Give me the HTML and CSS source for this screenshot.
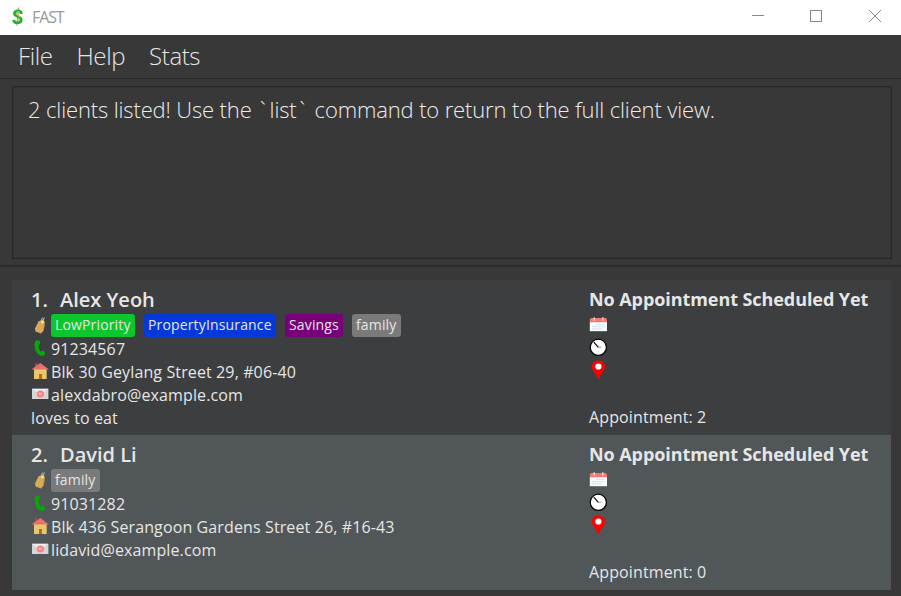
FILE: index.html
```html
<!DOCTYPE html>
<html lang="en">
<head>
<meta charset="utf-8">
<title>FAST</title>
<link rel="stylesheet" href="styles.css">
</head>
<body>
<svg class="defs" aria-hidden="true">
  <symbol id="tag" viewBox="0 0 18 18">
    <path d="M10.6 4 11.4 1.5M12 5 13.4 1.4" stroke="#c9c9c9" stroke-width=".9" fill="none"/>
    <path d="M7.4 5.4 11.4 3.6Q13.6 4.4 13.8 6.4L12.6 14.5 10 17.4 4.6 15.6 3.9 12.8Z" fill="#d8ab58"/>
    <path d="M13.5 6.8 12.4 14.5 10 17.2" stroke="#b98b3e" stroke-width=".8" fill="none"/>
    <circle cx="11.4" cy="6.2" r="1.1" fill="#fff3d5"/>
  </symbol>
  <symbol id="phone" viewBox="0 0 18 18">
    <path d="M4.4 .7 7.2 .2Q9.4 .5 9.2 3.8L7.4 5.4Q7.4 9 9.6 11.4L12.4 10.6 14.2 13Q13.6 16 11 15.9C5.9 15 3.4 9.8 3.6 3.2Z" fill="#07a60b"/>
  </symbol>
  <symbol id="home" viewBox="0 0 18 18">
    <path d="M4 0H6.5V4H4Z" fill="#a9433d"/>
    <path d="M3 6H15.7V16H3Z" fill="#e8c66d"/>
    <path d="M9.3 0 18 6.5H.3Z" fill="#e9716d"/>
    <path d="M8 11H11V16H8Z" fill="#b56a19"/>
  </symbol>
  <symbol id="mail" viewBox="0 0 18 18">
    <path d="M1 2.8H17.4V13H1Z" fill="#d4d6d8"/>
    <path d="M1 2.8H17.4L9.2 8.3Z" fill="#eceeef"/>
    <circle cx="9.4" cy="8" r="3.6" fill="#fa8080"/>
    <path d="M7.6 6.8 10.8 9.2M8 9.1 9.2 7.3 10.8 7.3" stroke="#ffd9d9" stroke-width=".8" fill="none"/>
  </symbol>
  <symbol id="calendar" viewBox="0 0 18 18">
    <path d="M.8 6H18V15.2H.8Z" fill="#fff"/>
    <path d="M.8 6.2V3.4L2 2H16.8L18 3.4V6.2Z" fill="#ff7373"/>
    <path d="M5.2 1.2V4.8M13.8 1.2V4.8" stroke="#d9e2e4" stroke-width="1.3"/>
    <path d="M7.5 8.5H16M3 10.6H16M3 12.8H13" stroke="#bbdcf7" stroke-width="1.2" stroke-dasharray="1.6 .8"/>
  </symbol>
  <symbol id="clock" viewBox="0 0 18 18">
    <circle cx="9.3" cy="9.3" r="8.1" fill="#fff" stroke="#000" stroke-width="1.2"/>
    <path d="M4.8 4.2 9.4 9.4" stroke="#000" stroke-width="1.1"/>
    <path d="M9.2 9.3H12.5" stroke="#999" stroke-width=".9"/>
  </symbol>
  <symbol id="pin" viewBox="0 0 18 20">
    <path d="M9.4.4C5.6.4 2.9 2.6 2.9 6.6 2.9 10.6 7.1 14.4 9.4 19.6 11.7 14.4 16 10.6 16 6.6 16 2.6 13.2.4 9.4.4Z" fill="#f00"/>
    <circle cx="9.4" cy="6.5" r="3.1" fill="#fff"/>
  </symbol>
</svg>
<div class="window">
  <header class="titlebar">
    <svg class="logo" viewBox="0 0 12 20">
      <path d="M6.6 .5 5 18.5" stroke="#a59a88" stroke-width="1.2"/>
      <path d="M9.3 7C9.2 3 2.4 3 2.4 6.6 2.4 10 9.2 9 9.2 12.6 9.2 17 2 16.8 1.7 12.8" fill="none" stroke="#24b22a" stroke-width="2.8"/>
      <path d="M4.2 6.2Q4.6 8.2 8 9.6M5.2 13.8 7.4 12.2M5.4 4.4 7.4 5.2" stroke="#d9c238" stroke-width="1.2" fill="none"/>
    </svg>
    <span class="title">FAST</span>
    <svg class="controls" viewBox="0 0 132 14" shape-rendering="crispEdges">
      <g stroke="#888" fill="none"><path d="M0 6.5H12M58.5 1.5H69.5V12.5H58.5Z"/><path shape-rendering="auto" d="M117 1 129 13M129 1 117 13"/></g>
    </svg>
  </header>
  <nav class="menu"><span>File</span><span>Help</span><span>Stats</span></nav>
  <section class="result-pane"><div class="result">2 clients listed! Use the <span class="tick">`</span>list<span class="tick">`</span> command to return to the full client view.</div></section>
  <main class="list">
    <article class="card">
      <div class="details">
        <h2><span class="num">1.</span><span>Alex Yeoh</span></h2>
        <div class="row tags"><svg class="icon"><use href="#tag"/></svg><span class="chip low">LowPriority</span><span class="chip property">PropertyInsurance</span><span class="chip savings">Savings</span><span class="chip family">family</span></div>
        <div class="row"><svg class="icon"><use href="#phone"/></svg><span>91234567</span></div>
        <div class="row"><svg class="icon"><use href="#home"/></svg><span>Blk 30 Geylang Street 29, #06-40</span></div>
        <div class="row"><svg class="icon"><use href="#mail"/></svg><span>alexdabro@example.com</span></div>
        <div class="row"><span>loves to eat</span></div>
      </div>
      <div class="appointment">
        <h3>No Appointment Scheduled Yet</h3>
        <svg class="icon cal"><use href="#calendar"/></svg>
        <svg class="icon clk"><use href="#clock"/></svg>
        <svg class="icon pin"><use href="#pin"/></svg>
        <div class="count">Appointment: 2</div>
      </div>
    </article>
    <article class="card alt">
      <div class="details">
        <h2><span class="num">2.</span><span>David Li</span></h2>
        <div class="row tags"><svg class="icon"><use href="#tag"/></svg><span class="chip family">family</span></div>
        <div class="row"><svg class="icon"><use href="#phone"/></svg><span>91031282</span></div>
        <div class="row"><svg class="icon"><use href="#home"/></svg><span>Blk 436 Serangoon Gardens Street 26, #16-43</span></div>
        <div class="row"><svg class="icon"><use href="#mail"/></svg><span>lidavid@example.com</span></div>
      </div>
      <div class="appointment">
        <h3>No Appointment Scheduled Yet</h3>
        <svg class="icon cal"><use href="#calendar"/></svg>
        <svg class="icon clk"><use href="#clock"/></svg>
        <svg class="icon pin"><use href="#pin"/></svg>
        <div class="count">Appointment: 0</div>
      </div>
    </article>
  </main>
</div>
</body>
</html>
```
FILE: styles.css
```css
* { box-sizing: border-box; }
body { margin: 0; background: #383838; font-family: "Open Sans", sans-serif; color: #e6e6e6; }
.defs { display: none; }
.window { width: 901px; height: 596px; overflow: hidden; white-space: nowrap; }
.titlebar { height: 35px; background: #fff; display: flex; align-items: center; padding: 0 17px 2px 12px; }
.logo { width: 12px; height: 20px; margin-right: 8px; }
.title { font-size: 16px; color: #999; letter-spacing: -1.1px; }
.controls { width: 132px; height: 14px; margin-left: auto; margin-top: -1px; }
.menu { height: 44px; border-bottom: 1px solid #292929; display: flex; gap: 24px; padding-left: 18px; font-size: 24px; letter-spacing: -.4px; font-weight: 300; line-height: 42px; }
.result-pane { height: 188px; padding: 7px 9px 7px 12px; border-bottom: 2px solid #2b2b2b; }
.result { height: 173px; border: 1px solid #292929; outline: 1px solid #323232; outline-offset: -2px; padding: 7px 15px; font-size: 22px; letter-spacing: -.14px; font-weight: 300; line-height: 30px; color: #ececec; }
.tick { display: inline-block; padding: 0 4px 0 2.8px; }
.list { padding: 13px 10px 0 12px; }
.card { height: 155px; background: #3c3e3f; display: grid; grid-template-columns: 558px 1fr; padding: 8px 0 0 19px; }
.alt { background: #515658; }
h2, h3 { margin: 0; font-weight: 600; }
h2 { height: 25px; display: flex; font-size: 20px; line-height: 24px; }
.num { width: 29px; }
h3 { height: 25px; font-size: 18px; font-weight: 700; line-height: 23px; letter-spacing: -.07px; }
.row { height: 23px; display: flex; align-items: center; gap: 2px; font-size: 16px; line-height: 23px; letter-spacing: .12px; }
.row .icon { margin-top: -1px; }
.tags { height: 24px; gap: 0; margin-top: 1px; align-items: flex-start; }
.tags .icon { margin: 2px 2px 0 0; }
.icon { width: 18px; height: 18px; display: block; flex: none; }
.chip { height: 23px; border-radius: 3px; font-size: 14px; font-weight: 500; line-height: 22px; letter-spacing: .15px; padding-left: 4px; margin-right: 9px; }
.low { width: 84px; background: #0bc62c; }
.property { width: 132px; background: #0438d9; }
.savings { width: 58px; background: #780078; }
.family { width: 49px; background: #7a7a7a; }
.appointment .cal { margin-top: 3px; }
.appointment .clk { margin-top: 4px; }
.appointment .pin { height: 20px; margin-top: 4px; }
.count { font-size: 16px; line-height: 23px; margin-top: 26px; letter-spacing: .12px; }
```
